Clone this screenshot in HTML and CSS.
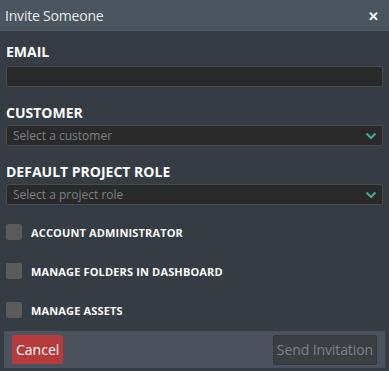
FILE: index.html
```html
<!DOCTYPE html>
<html lang="en">
<head>
    <meta charset="UTF-8">
    <meta name="viewport" content="width=device-width, initial-scale=1.0">
    <title>Invite Someone</title>
    <link rel="stylesheet" href="styles.css">
</head>
<body>
    <div class="modal">
        <div class="modal-header">
            <span class="modal-title">Invite Someone</span>
            <span class="close">&#x2715;</span>
        </div>
        <form class="modal-body">
            <div class="field">
                <label for="email">EMAIL</label>
                <input type="text" id="email" name="email">
            </div>
            <div class="field">
                <label for="customer">CUSTOMER</label>
                <div class="select">
                    <span>Select a customer</span>
                    <svg width="12" height="8" viewBox="0 0 12 8"><path d="M1.5 1.5 L6 6 L10.5 1.5" fill="none" stroke="#4aa588" stroke-width="2.2"/></svg>
                </div>
            </div>
            <div class="field">
                <label for="role">DEFAULT PROJECT ROLE</label>
                <div class="select">
                    <span>Select a project role</span>
                    <svg width="12" height="8" viewBox="0 0 12 8"><path d="M1.5 1.5 L6 6 L10.5 1.5" fill="none" stroke="#4aa588" stroke-width="2.2"/></svg>
                </div>
            </div>
            <div class="checks">
                <div class="check"><span class="box"></span>ACCOUNT ADMINISTRATOR</div>
                <div class="check"><span class="box"></span>MANAGE FOLDERS IN DASHBOARD</div>
                <div class="check"><span class="box"></span>MANAGE ASSETS</div>
            </div>
            <div class="modal-footer">
                <button type="button" class="btn-cancel">Cancel</button>
                <button type="button" class="btn-send" disabled>Send Invitation</button>
            </div>
        </form>
    </div>
</body>
</html>
```
FILE: styles.css
```css
body {
    margin: 0;
    font-family: "Open Sans", "Noto Sans", sans-serif;
    background-color: #363c44;
}
.modal {
    width: 389px;
    height: 371px;
    background: #363c44;
    display: flex;
    flex-direction: column;
}
.modal-header {
    height: 31px;
    background: #4b555f;
    display: flex;
    align-items: center;
    justify-content: space-between;
    padding: 0 10px 0 5px;
    color: #e9ecee;
}
.modal-title {
    font-size: 14px;
    letter-spacing: -0.2px;
}
.close {
    font-size: 13px;
    font-weight: bold;
    color: #fff;
}
.modal-body {
    flex: 1;
    padding: 11px 4px 3px 4px;
    display: flex;
    flex-direction: column;
}
.field {
    padding: 0 2px;
    margin-bottom: 16px;
}
.field label {
    display: block;
    font-size: 14px;
    font-weight: bold;
    color: #fff;
    margin-bottom: 3px;
}
input[type="text"], .select {
    box-sizing: border-box;
    width: 100%;
    height: 21px;
    background: #2a2a2a;
    border: 1px solid #474b50;
    border-radius: 2px;
    margin: 0;
}
.select {
    display: flex;
    align-items: center;
    justify-content: space-between;
    padding: 0 5px 0 6px;
    font-size: 12px;
    color: #7a7f85;
}
.checks {
    padding: 0 2px;
    margin-top: 3px;
}
.check {
    display: flex;
    align-items: center;
    height: 16px;
    margin-bottom: 23px;
    font-size: 11px;
    font-weight: bold;
    letter-spacing: 0.15px;
    color: #fff;
}
.check:last-child {
    margin-bottom: 13px;
}
.box {
    width: 16px;
    height: 16px;
    background: #5b5b5b;
    border-radius: 2px;
    margin-right: 9px;
}
.modal-footer {
    flex: 1;
    background: #4a535d;
    display: flex;
    align-items: center;
    justify-content: space-between;
    padding: 0 8px;
}
button {
    font-family: inherit;
    font-size: 14px;
    border: none;
    border-radius: 2px;
    cursor: pointer;
    height: 29px;
}
.btn-cancel {
    background: #b73b3b;
    color: #fff;
    padding: 0 4px;
}
.btn-send {
    background: #3b3f44;
    color: #7d8186;
    border: 1px solid #34383c;
    height: 30px;
    padding: 0 3px;
    letter-spacing: -0.1px;
}
```
